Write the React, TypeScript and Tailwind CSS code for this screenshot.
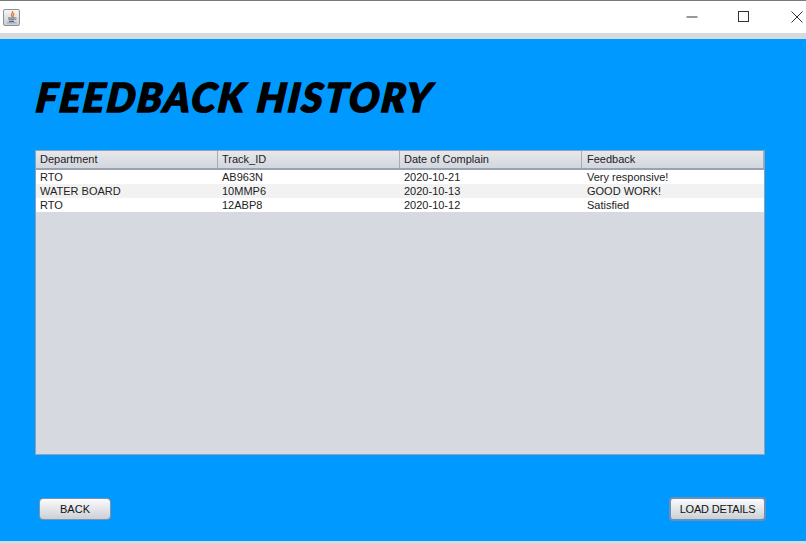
import React from 'react';

const columns = ['Department', 'Track_ID', 'Date of Complain', 'Feedback'];

const rows = [
  ['RTO', 'AB963N', '2020-10-21', 'Very responsive!'],
  ['WATER BOARD', '10MMP6', '2020-10-13', 'GOOD WORK!'],
  ['RTO', '12ABP8', '2020-10-12', 'Satisfied'],
];

function JavaIcon() {
  return (
    <div className="w-[17px] h-[17px] rounded-[2px] border border-[#8d9296] bg-gradient-to-b from-[#f4f5f6] to-[#c9ced3] flex items-center justify-center">
      <svg width="14" height="14" viewBox="0 0 14 14" fill="none">
        <path d="M7.500 1c1 1.500-1.500 2.500-1 4.500 0.200 0.800 1 1 1.500 1.500-0.200-1.500 1.500-2.500 0.500-4" stroke="#e8792b" strokeWidth="1.300" />
        <path d="M3 8h7M3.500 9.800h6M4 11.500h5" stroke="#53697f" strokeWidth="1" />
        <path d="M10 8c1.500-0.300 1.800 1.200 0 1.800" stroke="#53697f" strokeWidth="0.800" />
        <path d="M2 12.800h9.500" stroke="#7d8c9b" strokeWidth="0.800" />
      </svg>
    </div>
  );
}

function TitleBar() {
  return (
    <div className="h-[33px] bg-white border-t border-[#7a7a7a] flex items-center justify-between pl-[3px]">
      <JavaIcon />
      <div className="flex items-center">
        <svg className="mr-[40px]" width="12" height="12" viewBox="0 0 12 12" fill="none">
          <path d="M0.500 6h11" stroke="#333" strokeWidth="1" />
        </svg>
        <svg className="mr-[41px]" width="12" height="12" viewBox="0 0 12 12" fill="none">
          <rect x="0.500" y="0.500" width="10" height="10" stroke="#333" strokeWidth="1" />
        </svg>
        <svg className="mr-[3px]" width="12" height="12" viewBox="0 0 12 12" fill="none">
          <path d="M0.500 0.500l11 11M11.500 0.500l-11 11" stroke="#333" strokeWidth="1" />
        </svg>
      </div>
    </div>
  );
}

function FeedbackTable() {
  return (
    <div className="h-[305px] bg-[#d6d9df] border border-[#8fa3b8] flex flex-col">
      <div className="h-[19px] grid grid-cols-4 bg-gradient-to-b from-[#e6e8ec] to-[#d3d6dd] border-b-2 border-[#98a2b0] shrink-0">
        {columns.map((col) => (
          <div key={col} className="pl-[4px] last:pl-[5px] border-r border-[#a3adb9] text-[11px] leading-[17px] text-[#222]">
            {col}
          </div>
        ))}
      </div>
      {rows.map((row, i) => (
        <div key={i} className={`h-[14px] grid grid-cols-4 ${i % 2 === 0 ? 'bg-white' : 'bg-[#f2f2f2]'}`}>
          {row.map((cell, j) => (
            <div key={j} className="pl-[4px] last:pl-[5px] text-[11px] leading-[14px] text-[#222]">
              {cell}
            </div>
          ))}
        </div>
      ))}
    </div>
  );
}

export default function App() {
  return (
    <div className="w-[806px] h-[544px] overflow-hidden flex flex-col bg-[#d6d9df] font-['Liberation_Sans',Arial,sans-serif]">
      <TitleBar />
      <div className="h-[6px] bg-[#d6d9df]" />
      <main className="h-[502px] bg-[#0099ff] flex flex-col px-[35px] pr-[41px]">
        <h1 className="mt-[34px] h-[48px] -ml-[1px] origin-bottom-left -skew-x-[6deg] font-['Lato',sans-serif] font-black italic text-[40px] leading-[48px] text-black tracking-[2.2px] [-webkit-text-stroke:1.6px_black] whitespace-nowrap">
          FEEDBACK HISTORY
        </h1>
        <div className="mt-[29px]">
          <FeedbackTable />
        </div>
        <div className="mt-[42px] flex justify-between items-center pl-[4px]">
          <button className="w-[72px] h-[22px] rounded-[4px] border border-[#7f93a8] bg-gradient-to-b from-[#fbfbfc] to-[#ccd0d6] text-[11px] text-[#111]">
            BACK
          </button>
          <button className="-mr-[1px] w-[97px] h-[24px] rounded-[4px] border-2 border-[#6b8fb8] bg-gradient-to-b from-[#fbfbfc] to-[#ccd0d6] text-[11px] tracking-[-0.2px] text-[#111]">
            LOAD DETAILS
          </button>
        </div>
      </main>
    </div>
  );
}
